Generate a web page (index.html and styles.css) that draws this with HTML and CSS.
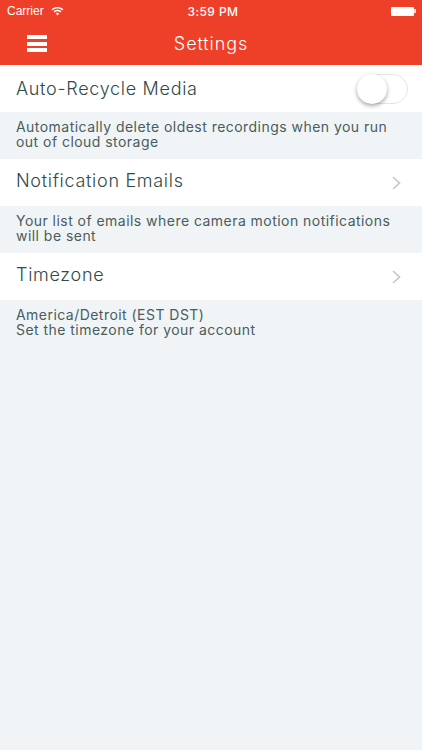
FILE: index.html
```html
<!DOCTYPE html>
<html lang="en">
<head>
    <meta charset="UTF-8">
    <meta name="viewport" content="width=device-width, initial-scale=1.0">
    <title>Settings</title>
    <link rel="stylesheet" href="styles.css">
</head>
<body>
    <header class="top-bar">
        <div class="status-bar">
            <div class="status-left">
                <span>Carrier</span>
                <svg class="wifi" width="13" height="10" viewBox="0 0 13 10">
                    <path d="M0.6 3.3C4 0.2 9 0.2 12.4 3.3L11.3 4.4C8.5 1.9 4.5 1.9 1.7 4.4Z" fill="#fff"/>
                    <path d="M2.6 5.3C4.9 3.3 8.1 3.3 10.4 5.3L9.3 6.4C7.6 5 5.4 5 3.7 6.4Z" fill="#fff"/>
                    <path d="M4.6 7.3C5.7 6.4 7.3 6.4 8.4 7.3L6.5 9.4Z" fill="#fff"/>
                </svg>
            </div>
            <span class="status-time">3:59 PM</span>
            <div class="battery">
                <div class="battery-body"></div>
                <div class="battery-tip"></div>
            </div>
        </div>
        <nav class="nav-bar">
            <button class="menu-button" aria-label="Menu">
                <span></span><span></span><span></span>
            </button>
            <h1>Settings</h1>
        </nav>
    </header>

    <main>
        <section class="row row-toggle">
            <h2>Auto-Recycle Media</h2>
            <div class="toggle"><div class="toggle-knob"></div></div>
        </section>
        <p class="note">Automatically delete oldest recordings when you run<br>out of cloud storage</p>

        <section class="row">
            <h2>Notification Emails</h2>
            <svg class="chevron" width="9" height="14" viewBox="0 0 9 14">
                <path d="M1 1L7.5 7L1 13" fill="none" stroke="#c4c8ca" stroke-width="1.7"/>
            </svg>
        </section>
        <p class="note">Your list of emails where camera motion notifications<br>will be sent</p>

        <section class="row">
            <h2>Timezone</h2>
            <svg class="chevron" width="9" height="14" viewBox="0 0 9 14">
                <path d="M1 1L7.5 7L1 13" fill="none" stroke="#c4c8ca" stroke-width="1.7"/>
            </svg>
        </section>
        <p class="note">America/Detroit (EST DST)<br>Set the timezone for your account</p>
    </main>
</body>
</html>
```

FILE: styles.css
```css
html, body {
    height: 100%;
}

body {
    margin: 0;
    background-color: #f0f4f7;
    color: #2f4a48;
    font-family: "Inter", "Liberation Sans", sans-serif;
    overflow: hidden;
}

.top-bar {
    height: 65px;
    background-color: #ee3f28;
    color: #fff;
}

.status-bar {
    display: flex;
    align-items: center;
    justify-content: space-between;
    position: relative;
    height: 22px;
    padding: 0 6px 0 7px;
    font-family: "Liberation Sans", sans-serif;
    font-size: 12px;
}

.status-left {
    display: flex;
    align-items: center;
    gap: 7px;
}

.status-time {
    position: absolute;
    left: 4px;
    right: 0;
    text-align: center;
    font-family: "Inter", sans-serif;
    font-weight: 500;
    letter-spacing: 0.4px;
}

.battery {
    display: flex;
    align-items: center;
}

.battery-body {
    width: 23px;
    height: 9px;
    background-color: #fff;
    border-radius: 1px;
}

.battery-tip {
    width: 2px;
    height: 4px;
    background-color: #fff;
    opacity: 0.8;
}

.nav-bar {
    display: flex;
    align-items: center;
    justify-content: center;
    position: relative;
    height: 43px;
}

.nav-bar h1 {
    margin: 0;
    font-size: 18px;
    font-weight: 300;
    letter-spacing: 0.9px;
}

.menu-button {
    position: absolute;
    left: 27px;
    top: 13px;
    display: flex;
    flex-direction: column;
    gap: 2.5px;
    width: 20px;
    padding: 0;
    background: none;
    border: none;
}

.menu-button span {
    display: block;
    height: 4px;
    background-color: #fff;
}

.row {
    display: flex;
    align-items: center;
    justify-content: space-between;
    height: 47px;
    padding: 0 21px 0 16px;
    background-color: #fff;
}

.row h2 {
    margin: 0;
    font-size: 18px;
    font-weight: 300;
    letter-spacing: 0.7px;
    position: relative;
    top: -2px;
}

.row-toggle h2 {
    top: 0;
}

.chevron {
    margin-top: 1px;
}

.note {
    margin: 0;
    height: 47px;
    box-sizing: border-box;
    padding: 8px 16px 0;
    font-size: 14px;
    line-height: 14.5px;
    letter-spacing: 0.46px;
    color: #4a5c5b;
}

.toggle {
    width: 51px;
    height: 30px;
    box-sizing: border-box;
    border: 1px solid #e3e5e6;
    border-radius: 15px;
    margin-right: -7px;
    background-color: #fff;
}

.toggle-knob {
    width: 30px;
    height: 30px;
    margin: -1px;
    border-radius: 50%;
    background-color: #fff;
    box-shadow: 0 2px 4px rgba(0, 0, 0, 0.35);
}
```
